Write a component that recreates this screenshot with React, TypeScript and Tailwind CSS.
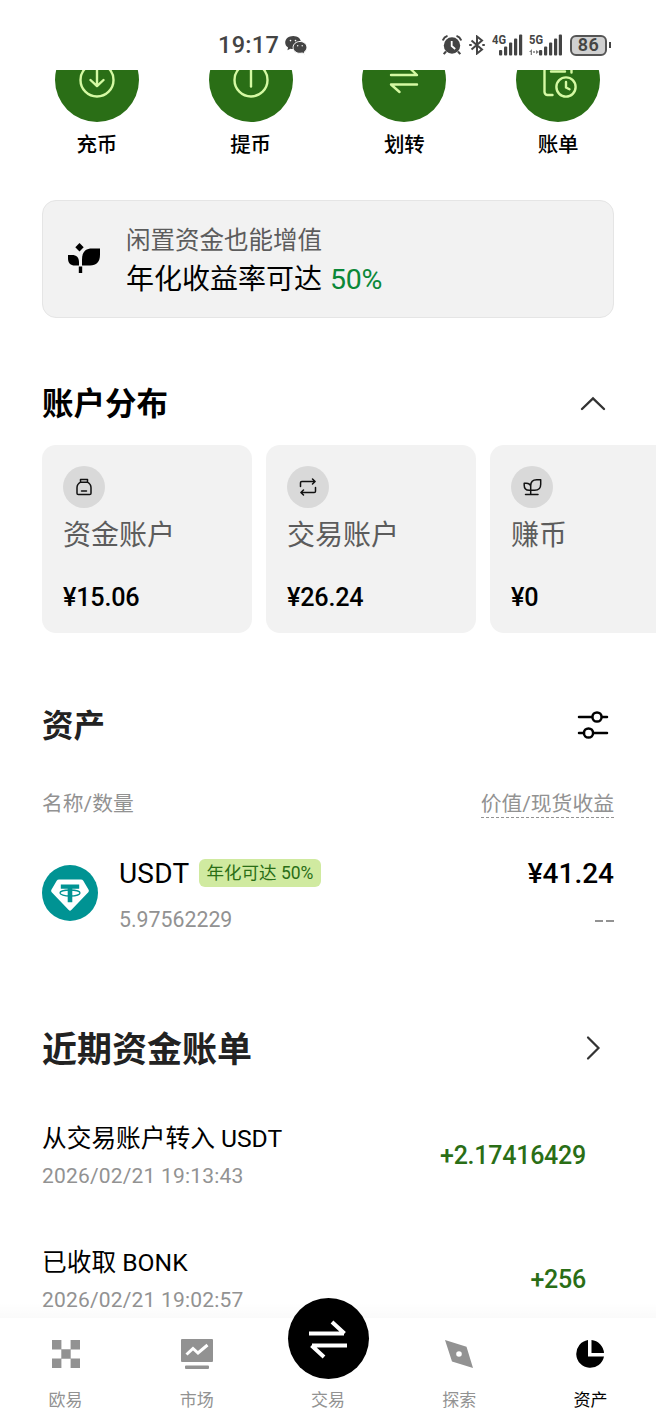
import type { ReactNode } from "react";

const latin = "font-[Roboto,'Noto_Sans_CJK_SC',sans-serif]";

const quickActions = [
  {
    label: "充币",
    icon: (
      <>
        <circle cx="21" cy="21" r="16.5" />
        <path d="M21 10v17M14.5 21l6.5 6.2 6.5-6.2" />
      </>
    ),
  },
  {
    label: "提币",
    icon: (
      <>
        <circle cx="21" cy="21" r="16.5" />
        <path d="M21 27.500V10" />
      </>
    ),
  },
  {
    label: "划转",
    icon: <path d="M8 16h26l-8.5-8M34 25.500H8l8.5 7.500" />,
  },
  {
    label: "账单",
    icon: (
      <>
        <path d="M34.500 13.500V6h-27v27a3 3 0 0 0 3 3h5M14 12.500h14" />
        <circle cx="29" cy="28" r="9.6" />
        <path d="M29 23v5.500l3.500 1.800" />
      </>
    ),
  },
];

const accounts = [
  {
    name: "资金账户",
    value: "¥15.06",
    icon: (
      <>
        <path d="M6.500 2.500h7v2.700h-7zM6.500 5.200C4.300 6.400 3 8.300 3 10.800v5.400q0 1.300 1.300 1.300h11.400q1.300 0 1.300-1.300v-5.400c0-2.500-1.300-4.400-3.500-5.600" />
        <path d="M7.500 14h5" />
      </>
    ),
  },
  {
    name: "交易账户",
    value: "¥26.24",
    icon: (
      <path d="M2.500 9.500V5.800q0-1.300 1.300-1.300h13M14.500 2l2.600 2.500L14.500 7M17.500 10.500v3.700q0 1.300-1.300 1.300h-13M5.500 13l-2.600 2.500L5.500 18" />
    ),
  },
  {
    name: "赚币",
    value: "¥0",
    icon: (
      <path d="M8.700 13.200V8.800q0-6 6-6h4v4.400q0 6-6 6zM8.700 13.200H7.200q-5 0-5-5V6.300h2q4 0 4.500 3.200M8.700 13v4.400M3.500 17.500h12.500" />
    ),
  },
];

const bills = [
  { title: "从交易账户转入 USDT", time: "2026/02/21 19:13:43", amount: "+2.17416429" },
  { title: "已收取 BONK", time: "2026/02/21 19:02:57", amount: "+256" },
];

function Signal({ label, sub }: { label: string; sub?: boolean }) {
  return (
    <svg width="33" height="24" viewBox="0 0 33 24" fill="#444" className="block">
      <text x="0" y="10.5" fontSize="13" fontWeight="700" fontFamily="Roboto" textLength="14" lengthAdjust="spacingAndGlyphs">
        {label}
      </text>
      {sub && <path d="M0 19l3-3v6h-1.300v-3zM4 18.300h2v1.500H4zM7 17l3 2-3 2z" opacity=".7" />}
      <rect x={sub ? 10 : 7} y="17" width="3.200" height="5.500" rx="1" />
      <rect x={sub ? 15 : 12} y="13.500" width="3.200" height="9" rx="1" />
      <rect x={sub ? 20 : 17} y="9.500" width="3.200" height="13" rx="1" />
      <rect x={sub ? 25 : 22} y="5.500" width="3.200" height="17" rx="1" />
      <rect x={sub ? 29.8 : 27} y="1.500" width="3.200" height="21" rx="1" />
    </svg>
  );
}

function StatusBar() {
  return (
    <header className="flex h-[70px] shrink-0 items-center pt-5 text-[#444]">
      <div className="ml-[218px] flex items-center">
        <span className="w-[61px] text-[23.500px] leading-6 font-medium tracking-[0.300px] whitespace-nowrap">19:17</span>
        <svg width="23" height="20" viewBox="0 0 23 20" className="ml-[6px]">
          <path fill="#444" d="M8.200 1C3.700 1 .2 3.800.2 7.500c0 2.100 1.100 3.900 2.900 5.100L2.400 15.200l3-1.500c.9.3 1.800.4 2.800.4C12.700 14 16 11.200 16 7.500S12.700 1 8.200 1z" />
          <path fill="#444" stroke="#fff" strokeWidth="1" d="M15 6.500c-3.900 0-6.900 2.600-6.900 5.900s3 5.900 6.900 5.900c.8 0 1.600-.1 2.300-.3l2.500 1.400-.6-2.300c1.600-1.100 2.700-2.800 2.700-4.700 0-3.300-3-5.900-6.900-5.900z" />
          <g fill="#fff">
            <circle cx="5.500" cy="5.600" r=".8" />
            <circle cx="10.500" cy="5.600" r=".8" />
            <circle cx="12.700" cy="10.700" r=".7" />
            <circle cx="17.200" cy="10.700" r=".7" />
          </g>
        </svg>
      </div>
      <div className="ml-[134px] flex items-center">
        <svg width="20" height="20" viewBox="0 0 20 20">
          <circle cx="10" cy="10.500" r="8.200" fill="#444" />
          <path d="M.8 5.500Q2 2 5.500.9M19.200 5.500Q18 2 14.500.9M4 16.500l-2.300 2.700M16 16.500l2.300 2.700" stroke="#444" strokeWidth="2" fill="none" />
          <path d="M9.700 6v5l3.500 3" stroke="#fff" strokeWidth="1.800" fill="none" />
        </svg>
        <svg width="16" height="20" viewBox="0 0 16 20" className="ml-[7px]" fill="none" stroke="#444" strokeWidth="2">
          <path d="M2.500 5.500l10.500 9L8 18.500V1.500l5 4-10.500 9" />
          <path d="M.2 10h2.500M13.300 10h2.500" />
        </svg>
        <div className="ml-[7px] flex">
          <Signal label="4G" />
          <div className="ml-1">
            <Signal label="5G" sub />
          </div>
        </div>
        <div className="ml-[8px] flex h-[21px] w-[37px] items-center justify-center rounded-[6px] border-2 border-[#555] bg-[#d0d0d0] text-[18px] leading-none font-semibold tracking-[0.500px]">
          86
        </div>
        <div className="ml-[2px] h-[6px] w-[2px] bg-[#444]" />
      </div>
    </header>
  );
}

function Tab({ label, active, children }: { label: string; active?: boolean; children?: ReactNode }) {
  return (
    <div className={`flex flex-1 flex-col items-center pt-5 ${active ? "text-black" : "text-[#929292]"}`}>
      <div className="flex h-8 w-8 items-center justify-center">{children}</div>
      <span className="mt-[18px] text-[17px] leading-6">{label}</span>
    </div>
  );
}

export default function App() {
  return (
    <div className={`flex h-[1424px] w-[656px] flex-col overflow-hidden bg-white text-black ${latin}`}>
      <StatusBar />

      <main className="min-h-0 flex-1 overflow-hidden">
        {/* Quick actions, scrolled partly under the status bar */}
        <section className="-mt-8 grid grid-cols-4 pr-[21px] pl-5">
          {quickActions.map((action) => (
            <div key={action.label} className="flex flex-col items-center">
              <div className="flex h-[84px] w-[84px] items-center justify-center rounded-full bg-[#2a6e16]">
                <svg width="42" height="42" viewBox="0 0 42 42" fill="none" stroke="#d5f9a3" strokeWidth="2.400" strokeLinecap="round" strokeLinejoin="round">
                  {action.icon}
                </svg>
              </div>
              <span className="mt-[9px] text-[20.500px] leading-7 font-medium">{action.label}</span>
            </div>
          ))}
        </section>

        {/* Earn banner */}
        <section className="mx-[42px] mt-[41px] flex h-[118px] items-center rounded-[14px] border border-[#e5e5e5] bg-[#f2f2f2] pl-6">
          <svg width="34" height="32" viewBox="0 0 34 32">
            <path d="M12.500 0l4.200 4.200-4.200 4.200-4.200-4.200z" />
            <path d="M1 12h4c4.500 0 7 2.500 7 7v3.500H8c-4.500 0-7-2.500-7-7zM15 22.500v-6C15 9 18.500 5.500 25 5.500h8v6c0 7.500-3.500 11-10 11z" />
            <path d="M11.800 23.500h3.400V30h-3.400z" />
          </svg>
          <div className="ml-[25px] pt-[3px]">
            <p className="text-[24.500px] leading-[38px] text-[#5c5c5c]">闲置资金也能增值</p>
            <p className="text-[28px] leading-[39px]">
              年化收益率可达 <span className="ml-px text-[28.500px] tracking-[-0.200px] text-[#0b8838]">50%</span>
            </p>
          </div>
        </section>

        {/* Account distribution */}
        <section className="mt-[66px] pl-[42px]">
          <div className="flex h-10 items-center justify-between pr-[50px]">
            <h2 className="pt-[2px] text-[31.500px] leading-10 font-bold">账户分布</h2>
            <svg width="26" height="16" viewBox="0 0 26 16" fill="none" stroke="#333" strokeWidth="2.400" strokeLinecap="round">
              <path d="M2 13L13 2.500 24 13" />
            </svg>
          </div>
          <div className="mt-[21px] flex gap-[14px] overflow-hidden">
            {accounts.map((account) => (
              <div key={account.name} className="h-[188px] w-[210px] shrink-0 rounded-[14px] bg-[#f2f2f2] px-[21px] py-[20.500px]">
                <div className="flex h-[42px] w-[42px] items-center justify-center rounded-full bg-[#d9d9d9]">
                  <svg width="20" height="20" viewBox="0 0 20 20" fill="none" stroke="#111" strokeWidth="1.500" strokeLinejoin="round" strokeLinecap="round">
                    {account.icon}
                  </svg>
                </div>
                <p className="mt-[8.500px] text-[28px] leading-10 text-[#5c5c5c]">{account.name}</p>
                <p className="mt-[26px] text-[25.200px] leading-8 font-medium tracking-[-0.200px]">{account.value}</p>
              </div>
            ))}
          </div>
        </section>

        {/* Assets */}
        <section className="mt-[72px] px-[42px]">
          <div className="flex h-10 items-center justify-between pr-[5px]">
            <h2 className="pt-1 text-[31.500px] leading-10 font-bold text-[#222]">资产</h2>
            <svg width="32" height="28" viewBox="0 0 32 28" fill="none" stroke="#000" strokeWidth="2.500" strokeLinecap="round">
              <path d="M2 6h13M25 6h5M2 22h5M17 22h13" />
              <circle cx="20" cy="6" r="4.600" />
              <circle cx="11.500" cy="22" r="4.600" />
            </svg>
          </div>
          <div className="mt-[47px] flex h-[27px] items-start justify-between text-[20.800px] leading-[25px] text-[#929292]">
            <span>名称/数量</span>
            <span className="border-b border-dashed border-[#929292]">价值/现货收益</span>
          </div>
          <div className="mt-[36px] flex">
            <svg width="56" height="56" viewBox="0 0 56 56" className="mt-[10px] shrink-0">
              <circle cx="28" cy="28" r="28" fill="#009393" />
              <path fill="#fff" d="M17 14.500h22q1.500 0 2.300 1.300l5.300 9q.8 1.300-.3 2.400L29.300 45q-1.300 1.300-2.600 0L9.700 27.200q-1.100-1.100-.3-2.400l5.300-9q.8-1.300 2.300-1.300z" />
              <path fill="#009393" d="M18.800 19.500h18.400v4.200h-6.900v13.500h-4.600V23.700h-6.900z" />
              <ellipse cx="28" cy="28" rx="10" ry="3" fill="none" stroke="#009393" strokeWidth="1.300" />
            </svg>
            <div className="ml-[21px] flex-1">
              <div className="flex h-9 items-center">
                <span className="w-[72px] pt-[2px] text-[28px] tracking-[0.200px]">USDT</span>
                <span className="ml-2 flex h-7 w-[122px] items-center justify-center rounded-[6px] bg-[#d0eaa0] text-[17.500px] whitespace-nowrap text-[#2a6e16]">
                  年化可达 50%
                </span>
                <span className="ml-auto pt-[2px] text-[28px] font-medium">¥41.24</span>
              </div>
              <div className="mt-[15px] flex h-7 items-center justify-between text-[21.300px] text-[#929292]">
                <span>5.97562229</span>
                <span className="flex gap-[3px] pt-[2px]">
                  <i className="h-[2px] w-2 bg-[#929292]" />
                  <i className="h-[2px] w-2 bg-[#929292]" />
                </span>
              </div>
            </div>
          </div>
        </section>

        {/* Recent bills */}
        <section className="mt-[92px] pl-[42px]">
          <div className="flex h-11 items-center justify-between pr-[55px]">
            <h2 className="pt-[5px] text-[35px] leading-[44px] font-bold text-[#222]">近期资金账单</h2>
            <svg width="16" height="26" viewBox="0 0 16 26" fill="none" stroke="#333" strokeWidth="2.200" strokeLinecap="round">
              <path d="M3 2.500L13.500 13 3 23.500" />
            </svg>
          </div>
          <div className="mt-[49px] flex flex-col gap-[51.500px] pr-[70px]">
            {bills.map((bill) => (
              <div key={bill.time} className="flex h-[73px] items-center justify-between">
                <div className="pt-[2px]">
                  <p className="text-[24.700px] leading-[38px]">{bill.title}</p>
                  <p className="text-[21px] leading-9 tracking-[0.180px] text-[#929292]">{bill.time}</p>
                </div>
                <span className="text-[25px] font-medium tracking-[-0.250px] text-[#2a6e16]">{bill.amount}</span>
              </div>
            ))}
          </div>
        </section>
      </main>

      <nav className="relative flex h-[106px] shrink-0 bg-white">
        <div className="absolute inset-x-0 -top-4 h-4 bg-linear-to-b from-transparent to-black/2" />
        <Tab label="欧易">
          <svg width="28" height="28" viewBox="0 0 28 28" fill="#929292">
            <path d="M0 0h9.400v9.400H0zM18.600 0H28v9.400h-9.400zM9.300 9.300h9.400v9.400H9.300zM0 18.600h9.400V28H0zM18.600 18.600H28V28h-9.400z" />
          </svg>
        </Tab>
        <Tab label="市场">
          <svg width="32" height="30" viewBox="0 0 32 30">
            <path fill="#929292" d="M1 0h30q1 0 1 1v21q0 1-1 1H1q-1 0-1-1V1q0-1 1-1zM5 26.500h22q1 0 1 1v1.500q0 1-1 1H5q-1 0-1-1v-1.500q0-1 1-1z" />
            <path d="M5.500 15.500l6.500-6 5 4.500 9.500-8" fill="none" stroke="#fff" strokeWidth="3" />
          </svg>
        </Tab>
        <Tab label="交易">
          <div className="absolute -top-5 flex h-[81px] w-[81px] items-center justify-center rounded-full bg-black">
            <svg width="42" height="42" viewBox="0 0 42 42" fill="none" stroke="#fff" strokeWidth="4">
              <path d="M2 15.500h35M25 4l12.500 11.500M40 27.500H5M17 39L4.500 27.500" strokeLinejoin="round" />
            </svg>
          </div>
        </Tab>
        <Tab label="探索">
          <svg width="28" height="28" viewBox="0 0 28 28">
            <path fill="#929292" fillRule="evenodd" d="M0 0l21.500 6.800L28 28 7 21.500zM14 11.200a2.800 2.800 0 1 0 0 5.600 2.800 2.800 0 0 0 0-5.600z" />
          </svg>
        </Tab>
        <Tab label="资产" active>
          <svg width="28" height="28" viewBox="0 0 28 28">
            <path d="M12 0a14 14 0 1 0 16 16.500H12zM15.500 0v13H28A14 14 0 0 0 15.500 0z" />
          </svg>
        </Tab>
      </nav>
    </div>
  );
}
